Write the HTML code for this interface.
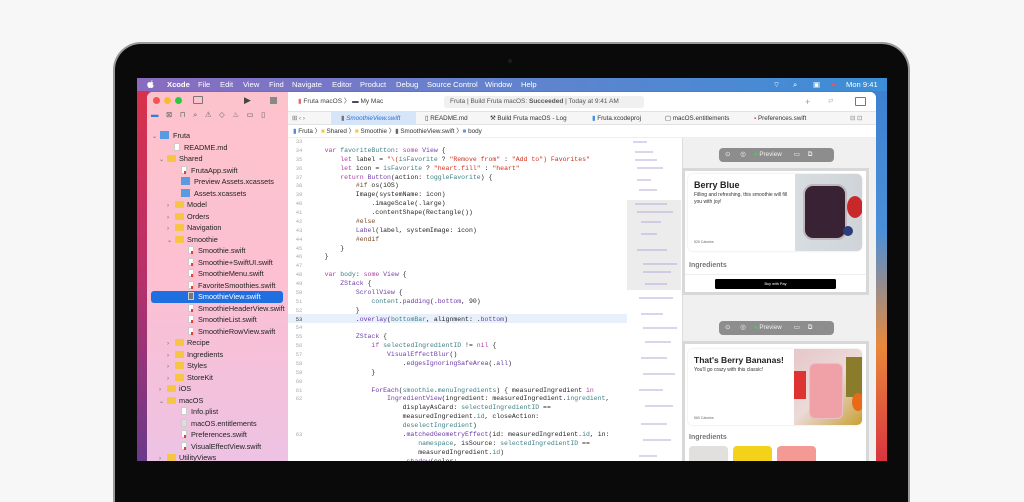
<!DOCTYPE html>
<html><head><meta charset="utf-8"><style>
*{margin:0;padding:0;box-sizing:border-box}
body{width:1024px;height:461px;overflow:hidden;background:#f7f7f7;font-family:"Liberation Sans",sans-serif;position:relative}
.abs{position:absolute}
.lap{left:113px;top:42px;width:797px;height:460px;background:#0a0a0a;border-radius:28px 28px 0 0;border:2px solid #9a9a9a;border-bottom:none}
.screen{left:137px;top:78px;width:750px;height:383px;background:linear-gradient(180deg,#3d7fd0 0%,#4b8fd8 40%,#e8893a 70%,#d9343f 100%);overflow:hidden}
.wl{left:0;top:13px;width:12px;height:370px;background:linear-gradient(180deg,#d8314b,#b8306a 50%,#6a3a8a)}
.menu{left:0;top:0;width:750px;height:13px;background:linear-gradient(90deg,#8a6bbf,#6a80cc 40%,#3b8ed6 100%);color:#fff;font-size:7.6px;line-height:13px}
.menu span{position:absolute;top:0}
.win{left:10px;top:14px;width:729px;height:380px;background:#fff;border-radius:6px 6px 0 0;overflow:hidden}
.side{left:0;top:0;width:141px;height:380px;background:linear-gradient(180deg,#fdc3cc 0%,#fcc0d2 50%,#ecc2e4 100%)}
.tree div{position:absolute;font-size:7.3px;color:#222;white-space:nowrap;height:11px;line-height:11px}
.fo{display:inline-block;width:9px;height:7px;background:#f6c544;border-radius:1px;margin-right:3px;vertical-align:-1px}
.fi{display:inline-block;width:6px;height:8px;background:#fff;border:0.5px solid #ccc;margin-right:4px;vertical-align:-1px;position:relative}
.fi.s:after{content:"";position:absolute;left:1.5px;top:4px;width:2.5px;height:2.5px;background:#e8402e}
.fi.a{background:#5a9ae0;border-color:#5a9ae0;width:9px}
.ch{display:inline-block;width:8px;color:#666;font-size:6px}
.code{left:162px;top:46px;width:318px;height:334px;font-family:"Liberation Mono",monospace;font-size:6.5px;line-height:8.87px;color:#262626;white-space:pre;overflow:hidden}
.ln{left:141px;top:46px;width:22px;height:334px;font-family:"Liberation Mono",monospace;font-size:5.5px;line-height:8.87px;color:#aaa;text-align:center;white-space:pre}
.k{color:#ad3da4}.t{color:#703daa}.s{color:#d12f1b}.p{color:#3e8087}.f{color:#6c36a9}.d{color:#78492a}
.mini{left:480px;top:46px;width:54px;height:334px;background:#fff}
.prev{left:535px;top:46px;width:194px;height:334px;background:#f0f0f0;border-left:1px solid #ddd}
.pill{width:115px;height:14px;background:#8d8d8d;border-radius:4px;color:#f2f2f2;font-size:6.3px;line-height:14px}
.frame{width:187px;background:#fff;border:3px solid #d8d8d8}
</style></head><body>
<div class="abs lap"></div>
<div class="abs" style="left:508px;top:59px;width:4px;height:4px;border-radius:50%;background:#1c1c1c"></div>
<div class="abs screen">
 <div class="abs wl"></div>
 <div class="abs menu">
  <svg class="abs" style="left:10px;top:2px" width="8" height="9" viewBox="0 0 8 9"><path d="M4 2.2C4.6 2.1 5.6 1.9 6.4 2.6 5.4 3.3 5.5 4.9 6.8 5.4 6.4 6.6 5.6 8 4.8 8 4.3 8 4.1 7.7 3.6 7.7 3 7.7 2.8 8 2.3 8 1.4 8 .3 6 .3 4.6.3 3 1.4 2.1 2.4 2.1 3 2.1 3.5 2.4 4 2.2ZM4.1 1.8C4 1 4.6.2 5.4.1 5.5 1 4.8 1.8 4.1 1.8Z" fill="#fff"/></svg>
  <span style="left:30px;font-weight:bold">Xcode</span>
  <span style="left:61px">File</span><span style="left:83px">Edit</span><span style="left:106px">View</span><span style="left:132px">Find</span><span style="left:155px">Navigate</span><span style="left:195px">Editor</span><span style="left:223px">Product</span><span style="left:259px">Debug</span><span style="left:290px">Source Control</span><span style="left:348px">Window</span><span style="left:384px">Help</span>
  <span style="left:636px">⌔</span><span style="left:656px">⌕</span><span style="left:676px">▣</span><span style="left:694px;color:#e55">●</span><span style="left:709px">Mon 9:41</span>
 </div>
 <div class="abs win">
  <div class="abs side">
   <div class="abs" style="left:6px;top:5px;width:7px;height:7px;border-radius:50%;background:#f2554d"></div>
   <div class="abs" style="left:17px;top:5px;width:7px;height:7px;border-radius:50%;background:#f8bb2e"></div>
   <div class="abs" style="left:28px;top:5px;width:7px;height:7px;border-radius:50%;background:#2bc840"></div>
   <div class="abs" style="left:46px;top:4px;width:10px;height:8px;border:1px solid #777;border-radius:1px"></div>
   <div class="abs" style="left:97px;top:3px;font-size:9px;color:#444">▶</div>
   <div class="abs" style="left:123px;top:5px;width:7px;height:7px;background:#888"></div>
   <div class="abs" style="left:4px;top:18px;width:136px;font-size:7.5px;color:#666;letter-spacing:7.5px;white-space:nowrap"><span style="color:#2d7ee0">▬</span>⊠⊓⌕⚠◇♨▭▯</div>
   <div class="tree">
    <div style="left:5px;top:38px"><span class="ch">⌄</span><span class="fi a"></span>Fruta</div>
    <div style="left:27px;top:50px"><span class="fi"></span>README.md</div>
    <div style="left:12px;top:61px"><span class="ch">⌄</span><span class="fo"></span>Shared</div>
    <div style="left:34px;top:73px"><span class="fi s"></span>FrutaApp.swift</div>
    <div style="left:34px;top:84px"><span class="fi a"></span>Preview Assets.xcassets</div>
    <div style="left:34px;top:96px"><span class="fi a"></span>Assets.xcassets</div>
    <div style="left:20px;top:107px"><span class="ch">›</span><span class="fo"></span>Model</div>
    <div style="left:20px;top:119px"><span class="ch">›</span><span class="fo"></span>Orders</div>
    <div style="left:20px;top:130px"><span class="ch">›</span><span class="fo"></span>Navigation</div>
    <div style="left:20px;top:142px"><span class="ch">⌄</span><span class="fo"></span>Smoothie</div>
    <div style="left:41px;top:153px"><span class="fi s"></span>Smoothie.swift</div>
    <div style="left:41px;top:165px"><span class="fi s"></span>Smoothie+SwiftUI.swift</div>
    <div style="left:41px;top:176px"><span class="fi s"></span>SmoothieMenu.swift</div>
    <div style="left:41px;top:188px"><span class="fi s"></span>FavoriteSmoothies.swift</div>
    <div style="left:4px;top:199px;width:132px;height:12px;background:#1f6fe0;border-radius:3px"></div>
    <div style="left:41px;top:199px;color:#fff"><span class="fi" style="background:#777"></span>SmoothieView.swift</div>
    <div style="left:41px;top:211px"><span class="fi s"></span>SmoothieHeaderView.swift</div>
    <div style="left:41px;top:222px"><span class="fi s"></span>SmoothieList.swift</div>
    <div style="left:41px;top:234px"><span class="fi s"></span>SmoothieRowView.swift</div>
    <div style="left:20px;top:245px"><span class="ch">›</span><span class="fo"></span>Recipe</div>
    <div style="left:20px;top:257px"><span class="ch">›</span><span class="fo"></span>Ingredients</div>
    <div style="left:20px;top:268px"><span class="ch">›</span><span class="fo"></span>Styles</div>
    <div style="left:20px;top:280px"><span class="ch">›</span><span class="fo"></span>StoreKit</div>
    <div style="left:12px;top:291px"><span class="ch">›</span><span class="fo"></span>iOS</div>
    <div style="left:12px;top:303px"><span class="ch">⌄</span><span class="fo"></span>macOS</div>
    <div style="left:34px;top:314px"><span class="fi"></span>Info.plist</div>
    <div style="left:34px;top:326px"><span class="fi" style="background:#ddd"></span>macOS.entitlements</div>
    <div style="left:34px;top:337px"><span class="fi s"></span>Preferences.swift</div>
    <div style="left:34px;top:349px"><span class="fi s"></span>VisualEffectView.swift</div>
    <div style="left:12px;top:360px"><span class="ch">›</span><span class="fo"></span>UtilityViews</div>
   </div>
  </div>
  <div class="abs" style="left:141px;top:0;width:588px;height:20px;background:#fff;border-bottom:1px solid #e2e2e2;font-size:6.5px;color:#444;line-height:20px">
   <span class="abs" style="left:10px;top:0"><span style="color:#e66">▮</span> Fruta macOS 〉 <span style="color:#446">▬</span> My Mac</span>
   <div class="abs" style="left:156px;top:4px;width:200px;height:12px;background:#f0f0f0;border-radius:3px;line-height:12px;padding-left:6px;color:#555">Fruta | Build Fruta macOS: <b>Succeeded</b> | Today at 9:41 AM</div>
   <span class="abs" style="left:517px;font-size:9px;color:#999">+</span><span class="abs" style="left:540px;color:#bbb">⇄</span>
   <div class="abs" style="left:567px;top:5px;width:11px;height:9px;border:1px solid #777;border-radius:1px"></div>
  </div>
  <div class="abs" style="left:141px;top:20px;width:588px;height:13px;background:#f6f6f6;border-bottom:1px solid #e2e2e2;font-size:6.3px;color:#333;line-height:13px;white-space:nowrap">
   <span class="abs" style="left:4px;color:#777">⊞ ‹ ›</span>
   <div class="abs" style="left:43px;top:0;width:85px;height:13px;background:#d6e6f8;color:#2a6fd6;font-style:italic;padding-left:10px"><span style="color:#777;font-style:normal">▮</span> SmoothieView.swift</div>
   <span class="abs" style="left:137px">▯ README.md</span>
   <span class="abs" style="left:202px">⚒ Build Fruta macOS - Log</span>
   <span class="abs" style="left:304px"><span style="color:#4a8ee0">▮</span> Fruta.xcodeproj</span>
   <span class="abs" style="left:377px">▢ macOS.entitlements</span>
   <span class="abs" style="left:466px"><span style="color:#e44">▪</span> Preferences.swift</span>
   <span class="abs" style="left:562px;color:#888">⊟ ⊡</span>
  </div>
  <div class="abs" style="left:141px;top:33px;width:588px;height:13px;background:#fff;border-bottom:1px solid #eee;font-size:6.3px;color:#333;line-height:13px;padding-left:5px;white-space:nowrap">
   <span style="color:#4a8ee0">▮</span> Fruta 〉<span style="color:#f6c544">■</span> Shared 〉<span style="color:#f6c544">■</span> Smoothie 〉<span style="color:#666">▮</span> SmoothieView.swift 〉<span style="color:#5a9ae0">■</span> body
  </div>
  <div class="abs" style="left:141px;top:222px;width:339px;height:9px;background:#e8f1fb"></div>
  <div class="abs ln">33
34
35
36
37
38
39
40
41
42
43
44
45
46
47
48
49
50
51
52
<span style="color:#333">53</span>
54
55
56
57
58
59
60
61
62



63</div>
  <div class="abs code"> 
    <span class="k">var</span> <span class="p">favoriteButton</span>: <span class="k">some</span> <span class="t">View</span> {
        <span class="k">let</span> label = <span class="s">"\(</span><span class="p">isFavorite</span> ? <span class="s">"Remove from"</span> : <span class="s">"Add to"</span><span class="s">) Favorites"</span>
        <span class="k">let</span> icon = <span class="p">isFavorite</span> ? <span class="s">"heart.fill"</span> : <span class="s">"heart"</span>
        <span class="k">return</span> <span class="t">Button</span>(action: <span class="p">toggleFavorite</span>) {
            <span class="d">#if</span> os(iOS)
            Image(systemName: icon)
                .imageScale(.large)
                .contentShape(Rectangle())
            <span class="d">#else</span>
            <span class="t">Label</span>(label, systemImage: icon)
            <span class="d">#endif</span>
        }
    }

    <span class="k">var</span> <span class="p">body</span>: <span class="k">some</span> <span class="t">View</span> {
        <span class="t">ZStack</span> {
            <span class="t">ScrollView</span> {
                <span class="p">content</span>.<span class="f">padding</span>(.<span class="f">bottom</span>, 90)
            }
            .<span class="f">overlay</span>(<span class="p">bottomBar</span>, alignment: .<span class="f">bottom</span>)

            <span class="t">ZStack</span> {
                <span class="k">if</span> <span class="p">selectedIngredientID</span> != <span class="k">nil</span> {
                    <span class="t">VisualEffectBlur</span>()
                        .<span class="f">edgesIgnoringSafeArea</span>(.<span class="f">all</span>)
                }

                <span class="f">ForEach</span>(<span class="p">smoothie</span>.<span class="p">menuIngredients</span>) { measuredIngredient <span class="k">in</span>
                    <span class="t">IngredientView</span>(ingredient: measuredIngredient.<span class="p">ingredient</span>,
                        displayAsCard: <span class="p">selectedIngredientID</span> ==
                        measuredIngredient.<span class="p">id</span>, closeAction:
                        <span class="p">deselectIngredient</span>)
                        .<span class="f">matchedGeometryEffect</span>(id: measuredIngredient.<span class="p">id</span>, in:
                            <span class="p">namespace</span>, isSource: <span class="p">selectedIngredientID</span> ==
                            measuredIngredient.<span class="p">id</span>)
                        .<span class="f">shadow</span>(color:</div>
  <div class="abs mini">
   <div class="abs" style="left:0;top:62px;width:54px;height:90px;background:#ececec"></div>
   <svg class="abs" style="left:0;top:0" width="54" height="334">
    <g stroke="#b8a8d8" stroke-width="1">
     <line x1="6" y1="4" x2="20" y2="4"/><line x1="8" y1="14" x2="26" y2="14"/><line x1="8" y1="22" x2="30" y2="22"/><line x1="10" y1="30" x2="36" y2="30"/><line x1="10" y1="42" x2="24" y2="42"/><line x1="12" y1="52" x2="30" y2="52"/><line x1="8" y1="66" x2="40" y2="66"/><line x1="10" y1="74" x2="46" y2="74"/><line x1="14" y1="84" x2="34" y2="84"/><line x1="14" y1="96" x2="30" y2="96"/><line x1="10" y1="112" x2="40" y2="112"/><line x1="16" y1="126" x2="50" y2="126"/><line x1="16" y1="134" x2="44" y2="134"/><line x1="18" y1="146" x2="40" y2="146"/><line x1="12" y1="160" x2="46" y2="160"/><line x1="14" y1="176" x2="36" y2="176"/><line x1="16" y1="190" x2="50" y2="190"/><line x1="18" y1="204" x2="44" y2="204"/><line x1="14" y1="220" x2="40" y2="220"/><line x1="16" y1="236" x2="48" y2="236"/><line x1="12" y1="252" x2="36" y2="252"/><line x1="18" y1="268" x2="46" y2="268"/><line x1="14" y1="286" x2="40" y2="286"/><line x1="16" y1="302" x2="44" y2="302"/><line x1="12" y1="318" x2="30" y2="318"/>
    </g>
   </svg>
  </div>
  <div class="abs prev">
   <div class="abs pill" style="left:36px;top:10px"><span style="margin-left:6px">⊙</span><span style="margin-left:10px">◎</span><span style="margin-left:8px;color:#3fd24a">●</span> Preview<span style="margin-left:12px">▭</span><span style="margin-left:8px">⧉</span></div>
   <div class="abs frame" style="left:-1px;top:30px;height:127px">
    <div class="abs" style="left:3px;top:3px;width:174px;height:77px;border-radius:5px;background:#fff;box-shadow:0 0 2px #ddd;overflow:hidden">
     <div class="abs" style="left:6px;top:6px;font-size:9px;font-weight:bold;color:#222">Berry Blue</div>
     <div class="abs" style="left:6px;top:18px;width:96px;font-size:5px;color:#333;line-height:6.5px">Filling and refreshing, this smoothie will fill you with joy!</div>
     <div class="abs" style="left:6px;top:66px;font-size:3.5px;color:#666">520 Calories</div>
     <div class="abs" style="left:107px;top:0;width:67px;height:77px;background:linear-gradient(90deg,#d7dde0,#cfd4d8)">
      <div class="abs" style="left:8px;top:10px;width:44px;height:56px;border-radius:10px;background:#3a2235;border:2px solid #bfb8bf"></div>
      <div class="abs" style="left:52px;top:22px;width:16px;height:22px;border-radius:50%;background:#c8282a"></div>
      <div class="abs" style="left:48px;top:52px;width:10px;height:10px;border-radius:50%;background:#2d3c7a"></div>
     </div>
    </div>
    <div class="abs" style="left:4px;top:91px;font-size:7px;font-weight:bold;color:#777">Ingredients</div>
    <div class="abs" style="left:0;top:103px;width:181px;border-top:1px solid #eee"></div>
    <div class="abs" style="left:30px;top:108px;width:121px;height:10px;background:#000;border-radius:1.5px;color:#fff;font-size:3.8px;text-align:center;line-height:10px">Buy with Pay</div>
   </div>
   <div class="abs pill" style="left:36px;top:183px"><span style="margin-left:6px">⊙</span><span style="margin-left:10px">◎</span><span style="margin-left:8px;color:#3fd24a">●</span> Preview<span style="margin-left:12px">▭</span><span style="margin-left:8px">⧉</span></div>
   <div class="abs frame" style="left:-1px;top:203px;height:140px">
    <div class="abs" style="left:3px;top:5px;width:174px;height:76px;border-radius:5px;background:#fff;box-shadow:0 0 2px #ddd;overflow:hidden">
     <div class="abs" style="left:6px;top:6px;font-size:8.5px;font-weight:bold;color:#222">That's Berry Bananas!</div>
     <div class="abs" style="left:6px;top:18px;font-size:5px;color:#333">You'll go crazy with this classic!</div>
     <div class="abs" style="left:6px;top:67px;font-size:3.5px;color:#666">560 Calories</div>
     <div class="abs" style="left:106px;top:0;width:68px;height:76px;background:linear-gradient(135deg,#e8c6c8,#eadad8 50%,#c8a034)">
      <div class="abs" style="left:0;top:22px;width:12px;height:28px;background:#d33"></div>
      <div class="abs" style="left:15px;top:14px;width:34px;height:56px;border-radius:6px;background:#f0a1a8;border:1px solid #e8c0c6"></div>
      <div class="abs" style="left:52px;top:8px;width:16px;height:40px;background:#8a7c2a"></div>
      <div class="abs" style="left:58px;top:44px;width:12px;height:18px;border-radius:50%;background:#e86a16"></div>
     </div>
    </div>
    <div class="abs" style="left:4px;top:90px;font-size:7px;font-weight:bold;color:#777">Ingredients</div>
    <div class="abs" style="left:4px;top:102px;width:39px;height:20px;border-radius:4px;background:#e2e0dc"></div>
    <div class="abs" style="left:48px;top:102px;width:39px;height:20px;border-radius:4px;background:#f5d21a"></div>
    <div class="abs" style="left:92px;top:102px;width:39px;height:20px;border-radius:4px;background:#f49a94"></div>
   </div>
  </div>
 </div>
</div>
</body></html>
